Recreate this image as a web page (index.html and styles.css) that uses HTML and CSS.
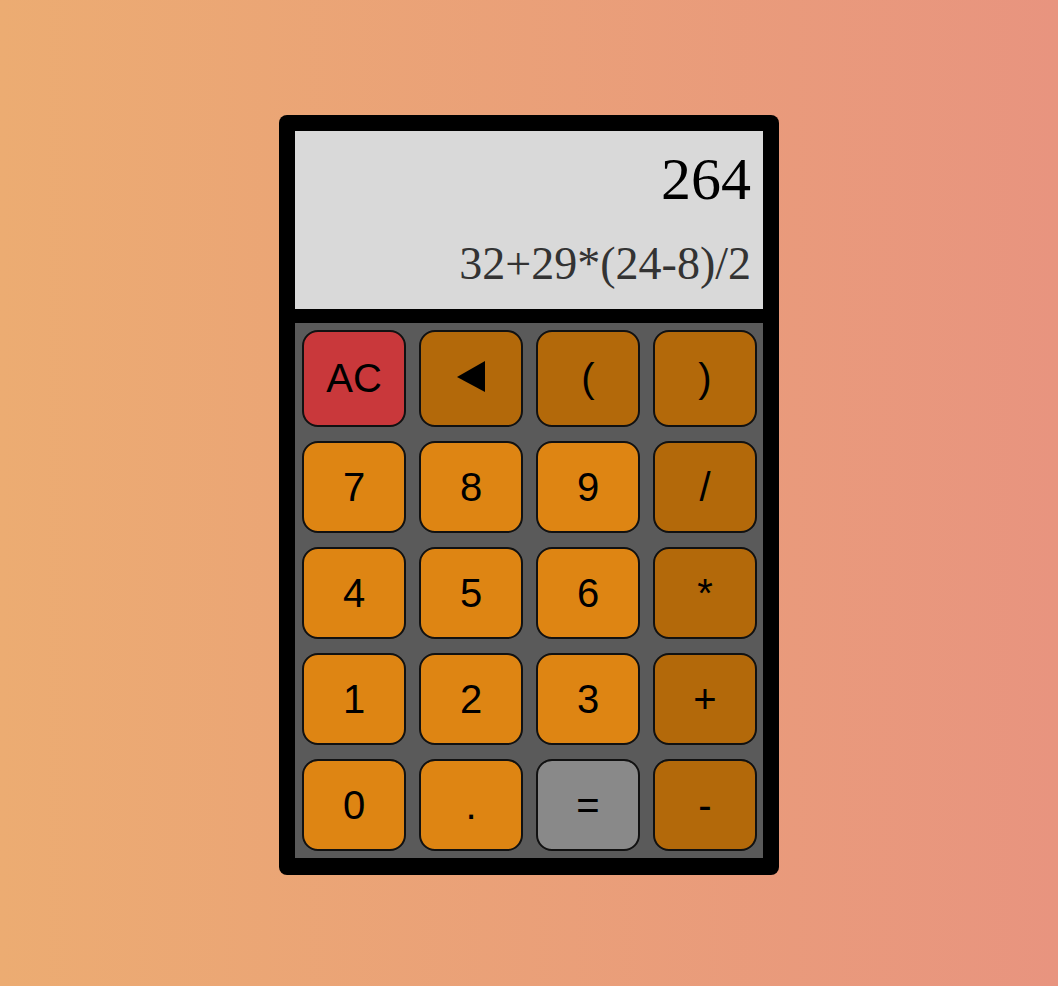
FILE: index.html
```html
<!DOCTYPE html>
<html>
<head>
<meta charset="utf-8">
<link rel="stylesheet" href="styles.css">
</head>
<body>
<div class="calc">
  <div class="display">
    <div class="result">264</div>
    <div class="expr">32+29*(24-8)/2</div>
  </div>
  <div class="keypad">
    <div class="key red">AC</div>
    <div class="key dark"><svg class="back" width="28" height="31" viewBox="0 0 28 31"><polygon points="0,16 28,0 28,31" fill="#000"/></svg></div>
    <div class="key dark">(</div>
    <div class="key dark">)</div>
    <div class="key">7</div>
    <div class="key">8</div>
    <div class="key">9</div>
    <div class="key dark">/</div>
    <div class="key">4</div>
    <div class="key">5</div>
    <div class="key">6</div>
    <div class="key dark">*</div>
    <div class="key">1</div>
    <div class="key">2</div>
    <div class="key">3</div>
    <div class="key dark">+</div>
    <div class="key">0</div>
    <div class="key">.</div>
    <div class="key gray">=</div>
    <div class="key dark">-</div>
  </div>
</div>
</body>
</html>
```
FILE: styles.css
```css
html, body {
  margin: 0;
  height: 100%;
}
body {
  background: linear-gradient(to right, #ecac72, #e8947f);
  display: flex;
  justify-content: center;
  align-items: flex-start;
  padding-top: 115px;
  box-sizing: border-box;
  font-family: "Liberation Sans", Arial, sans-serif;
}
.calc {
  width: 468px;
  background: #000;
  padding: 16px 16px 17px 16px;
  border-radius: 8px;
  display: flex;
  flex-direction: column;
  gap: 14px;
}
.display {
  height: 178px;
  background: #d9d9d9;
  box-sizing: border-box;
  padding: 12px 12px 0 12px;
  text-align: right;
  font-family: "Liberation Serif", "Times New Roman", serif;
}
.result {
  font-size: 60px;
  line-height: 72px;
  color: #000;
}
.expr {
  font-size: 46px;
  line-height: 56px;
  margin-top: 21px;
  color: #333;
}
.keypad {
  background: #5a5a5a;
  padding: 7px 6px 7px 7px;
  display: grid;
  grid-template-columns: repeat(4, 1fr);
  grid-template-rows: 97px repeat(4, 92px);
  column-gap: 13px;
  row-gap: 14px;
}
.key {
  background: #de8513;
  border: 2px solid #111;
  border-radius: 16px;
  display: flex;
  align-items: center;
  justify-content: center;
  font-size: 40px;
  color: #000;
}
.key.dark {
  background: #b3690a;
}
.key.red {
  background: #c9383b;
}
.key.gray {
  background: #898989;
}
.back {
  display: block;
  margin-top: -4px;
}
```
